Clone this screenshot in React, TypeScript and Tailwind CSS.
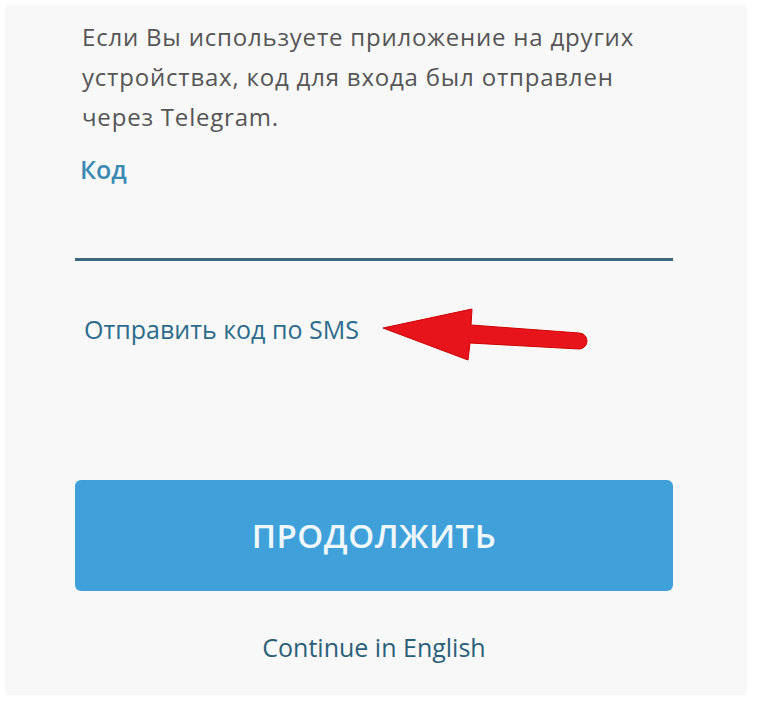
export default function App() {
  return (
    <div className="w-[762px] h-[702px] bg-white p-[5px] font-['Open_Sans',sans-serif]">
      <div className="h-[690px] w-[742px] bg-[#f8f8f8] pl-[70px]">
        <div className="w-[598px] flex flex-col">
          <p className="w-[575px] pl-[7px] pt-[12px] text-[24px] leading-[40px] tracking-[0.8px] text-[#555]">
            Если Вы используете приложение на других устройствах, код для входа был отправлен через Telegram.
          </p>
          <label className="pl-[5px] mt-[18px] text-[25px] leading-[28px] font-semibold text-[#3a8ab3]">Код</label>
          <div className="mt-[75px] h-[3px] bg-[#3b6a80]" />
          <div className="relative mt-[53px] flex items-center">
            <a className="pl-[9px] text-[25px] leading-[30px] text-[#2d6c8c]">Отправить код по SMS</a>
            <svg className="absolute left-[305px] top-[-22px]" width="220" height="80" viewBox="0 0 220 80">
              <path d="M3 36 L92 17 L91 33 L199 41 A8 8 0 0 1 199 57 L90 51 L88 68 Z" fill="#e8141c" stroke="#c00" strokeWidth="1" strokeLinejoin="round" />
            </svg>
          </div>
          <button className="mt-[136px] h-[111px] rounded-[6px] bg-[#3fa0da] text-[33px] font-semibold text-[#eef8fd] tracking-[0.5px]">
            ПРОДОЛЖИТЬ
          </button>
          <a className="mt-[40px] text-center text-[25px] leading-[32px] text-[#2b5f78]">Continue in English</a>
        </div>
      </div>
    </div>
  );
}
